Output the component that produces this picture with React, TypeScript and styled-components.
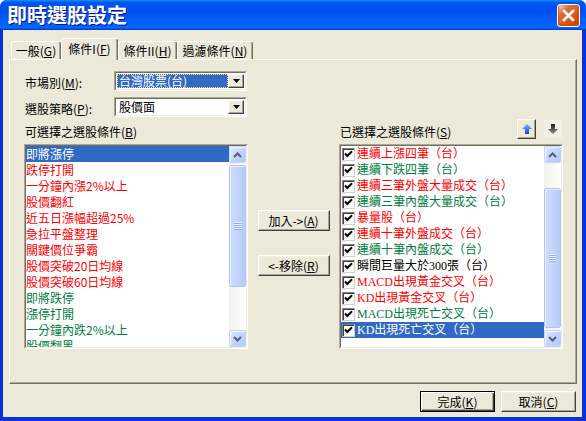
import React from 'react';
import styled, { createGlobalStyle, css } from 'styled-components';

const UI_FONT = `"Noto Sans CJK TC", "Liberation Sans", sans-serif`;
const RED = '#FF0000';
const GREEN = '#008040';
const HILITE = '#316AC5';

const GlobalStyle = createGlobalStyle`
  html, body { margin: 0; padding: 0; background: #ffffff; }
  body { font-family: ${UI_FONT}; font-size: 12px; }
  #root { width: 586px; height: 421px; }
`;

const Window = styled.div`
  width: 586px;
  height: 421px;
  box-sizing: border-box;
  display: flex;
  flex-direction: column;
  background: #0831d9;
  border-radius: 7px 7px 0 0;
  overflow: hidden;
  font-family: ${UI_FONT};
  font-size: 12px;
  color: #000;
`;

const TitleBar = styled.div`
  height: 30px;
  flex: none;
  display: flex;
  align-items: center;
  justify-content: space-between;
  padding: 0 6px 0 7px;
  background: linear-gradient(
    180deg,
    #0997ff,
    #0053ee 8%,
    #0050ee 40%,
    #0066ff 88%,
    #0066ff 93%,
    #005bff 95%,
    #003dd7 96%,
    #003dd7
  );
`;

const Title = styled.div`
  color: #fff;
  font-weight: 700;
  font-size: 20px;
  line-height: 24px;
  text-shadow: 1px 1px #0f1089;
  white-space: nowrap;
`;

const CloseButton = styled.div`
  width: 21px;
  height: 21px;
  border: 1px solid #fff;
  border-radius: 3px;
  background: radial-gradient(circle at 90% 90%, #cc4600 0%, #dc6527 55%, #cd7546 70%, #ffccb2 90%, #fff 100%);
  box-shadow: inset 0 -1px 2px 1px #da4600;
  display: flex;
  align-items: center;
  justify-content: center;
`;

const Body = styled.div`
  flex: 1;
  margin: 0 4px 4px 3px;
  background: #ece9d8;
  padding: 8px 5px 0 6px;
  display: flex;
  flex-direction: column;
`;

const TabRow = styled.div`
  display: flex;
  align-items: flex-end;
  height: 21px;
  padding-left: 2px;
  flex: none;
`;

const Tab = styled.div<{ $active?: boolean; $w: number }>`
  box-sizing: border-box;
  width: ${(p) => p.$w}px;
  height: ${(p) => (p.$active ? 22 : 18)}px;
  margin-bottom: ${(p) => (p.$active ? -1 : 0)}px;
  padding-bottom: ${(p) => (p.$active ? 2 : 0)}px;
  position: relative;
  z-index: ${(p) => (p.$active ? 2 : 1)};
  background: #ece9d8;
  border-top: 1px solid #fff;
  border-left: 1px solid #fff;
  border-right: 1px solid #716f64;
  box-shadow: inset -1px 0 #aca899;
  border-radius: 3px 3px 0 0;
  display: flex;
  align-items: center;
  justify-content: center;
  line-height: 16px;
  white-space: nowrap;
`;

const Key = styled.u`
  text-decoration: underline;
  text-underline-offset: 1px;
`;

const Panel = styled.div`
  box-sizing: border-box;
  height: 325px;
  flex: none;
  border: 1px solid;
  border-color: #fff #716f64 #716f64 #fff;
  box-shadow: inset -1px -1px #aca899;
  padding: 11px 0 0 14px;
  display: flex;
  flex-direction: column;
`;

const FormRow = styled.div`
  display: grid;
  grid-template-columns: 90px 133px;
  align-items: start;
  height: 20px;
  & + & {
    margin-top: 6px;
  }
`;

const FieldLabel = styled.div`
  padding: 4px 0 0 1px;
  line-height: 16px;
  white-space: nowrap;
`;

const Sunken = styled.div`
  box-sizing: border-box;
  border: 1px solid;
  border-color: #aca899 #fff #fff #aca899;
`;

const SunkenInner = styled.div`
  box-sizing: border-box;
  height: 100%;
  border: 1px solid;
  border-color: #716f64 #f1efe2 #f1efe2 #716f64;
  background: #fff;
`;

const Combo = styled(Sunken)`
  height: 20px;
`;

const ComboInner = styled(SunkenInner)`
  display: flex;
  padding: 1px;
`;

const ComboValue = styled.div<{ $focused?: boolean }>`
  flex: 1;
  box-sizing: border-box;
  line-height: 12px;
  padding-left: 1px;
  white-space: nowrap;
  border: 1px ${(p) => (p.$focused ? 'dotted #f7e28a' : 'solid transparent')};
  background: ${(p) => (p.$focused ? HILITE : 'transparent')};
  color: ${(p) => (p.$focused ? '#fff' : '#000')};
`;

const raised = css`
  border: 1px solid;
  border-color: #fff #404040 #404040 #fff;
  box-shadow: inset -1px -1px #aca899, inset 1px 1px #f1efe2;
  background: #ece9d8;
`;

const ComboButton = styled.div`
  box-sizing: border-box;
  width: 16px;
  flex: none;
  ${raised};
  display: flex;
  align-items: center;
  justify-content: center;
`;

const ListsGrid = styled.div`
  display: grid;
  grid-template-columns: 224px 91px 224px;
  margin-top: 2px;
`;

const Column = styled.div`
  display: flex;
  flex-direction: column;
`;

const ColumnHeader = styled.div`
  height: 25px;
  display: flex;
  justify-content: space-between;
  align-items: flex-start;
`;

const HeaderLabel = styled.div`
  align-self: flex-end;
  padding: 0 0 4px 1px;
  line-height: 16px;
  white-space: nowrap;
`;

const OrderButtons = styled.div`
  display: flex;
  gap: 8px;
  margin-right: 1px;
`;

const OrderButton = styled.div<{ $raised?: boolean }>`
  box-sizing: border-box;
  display: flex;
  align-items: center;
  justify-content: center;
  ${(p) =>
    p.$raised
      ? css`
          width: 19px;
          height: 20px;
          ${raised};
        `
      : css`
          width: 18px;
          height: 18px;
          margin-top: 1px;
          background: #f1efe6;
        `}
`;

const ListFrame = styled(Sunken)`
  height: 205px;
`;

const ListInner = styled(SunkenInner)`
  display: flex;
`;

const Items = styled.div`
  flex: 1;
  overflow: hidden;
`;

const ItemRow = styled.div<{ $color: string; $selected?: boolean; $serif?: boolean }>`
  height: 16px;
  line-height: 16px;
  white-space: nowrap;
  display: flex;
  align-items: center;
  color: ${(p) => (p.$selected ? '#fff' : p.$color)};
  background: ${(p) => (p.$selected ? HILITE : 'transparent')};
  font-family: ${(p) => (p.$serif ? `"Liberation Serif", ${UI_FONT}` : UI_FONT)};
`;

const CheckBox = styled.span`
  box-sizing: border-box;
  width: 13px;
  height: 13px;
  flex: none;
  margin: 0 2px 0 1px;
  background: #fff;
  border: 1px solid;
  border-color: #808080 #d4d0c8 #d4d0c8 #808080;
  box-shadow: inset 1px 1px #404040;
  display: flex;
  align-items: center;
  justify-content: center;
`;

const ScrollBar = styled.div`
  width: 17px;
  flex: none;
  display: flex;
  flex-direction: column;
  background: linear-gradient(to right, #f3f1ec, #fefefb);
`;

const ScrollArrow = styled.div`
  box-sizing: border-box;
  height: 17px;
  flex: none;
  border: 1px solid #c3d3fd;
  border-radius: 2px;
  background: linear-gradient(135deg, #e3ebff 0%, #c5d6fd 45%, #b5c9f8 100%);
  box-shadow: inset 1px 1px #f2f6ff;
  display: flex;
  align-items: center;
  justify-content: center;
`;

const Track = styled.div`
  flex: 1;
  display: flex;
  flex-direction: column;
`;

const Thumb = styled.div<{ $top: number; $h: number }>`
  box-sizing: border-box;
  margin-top: ${(p) => p.$top}px;
  height: ${(p) => p.$h}px;
  border: 1px solid #b1c5f4;
  border-radius: 2px;
  background: linear-gradient(to right, #cfdcfe 0%, #c3d4fd 50%, #b7caf8 100%);
  box-shadow: inset 1px 1px #e6eeff;
  display: flex;
  align-items: center;
  justify-content: center;
`;

const Grip = styled.div`
  width: 7px;
  height: 8px;
  background: repeating-linear-gradient(to bottom, #eef4fe 0 1px, #8cb0f8 1px 2px);
`;

const MiddleColumn = styled.div`
  display: flex;
  flex-direction: column;
  align-items: center;
  padding-top: 91px;
  gap: 24px;
`;

const Button = styled.div<{ $w: number; $default?: boolean }>`
  box-sizing: border-box;
  width: ${(p) => p.$w}px;
  height: 21px;
  ${raised};
  ${(p) =>
    p.$default &&
    css`
      border: 1px solid #000;
      box-shadow: inset 1px 1px #fff, inset -1px -1px #404040, inset -2px -2px #aca899;
    `}
  display: flex;
  align-items: center;
  justify-content: center;
  line-height: 16px;
  white-space: nowrap;
`;

const Footer = styled.div`
  display: flex;
  justify-content: flex-end;
  gap: 6px;
  margin-top: 7px;
  padding-right: 1px;
`;

const DownTriangle = () => (
  <svg width="7" height="4" viewBox="0 0 7 4">
    <path d="M0 0 H7 L3.5 4 Z" fill="#000" />
  </svg>
);

const Chevron = ({ up }: { up?: boolean }) => (
  <svg width="9" height="6" viewBox="0 0 9 6">
    <polyline
      points={up ? '1,5 4.5,1.5 8,5' : '1,1 4.5,4.5 8,1'}
      fill="none"
      stroke="#4d6185"
      strokeWidth="2"
    />
  </svg>
);

const Check = () => (
  <svg width="9" height="9" viewBox="0 0 9 9">
    <path d="M1 3.5 L3.3 6 L8 1.3" fill="none" stroke="#000" strokeWidth="2" />
  </svg>
);

const ArrowIcon = ({ down }: { down?: boolean }) => (
  <svg width="12" height="12" viewBox="0 0 12 12">
    <defs>
      <linearGradient id="upg" x1="0" y1="0" x2="0" y2="1">
        <stop offset="0" stopColor="#7fb2ff" />
        <stop offset="1" stopColor="#1046d8" />
      </linearGradient>
      <linearGradient id="dng" x1="0" y1="0" x2="0" y2="1">
        <stop offset="0" stopColor="#202020" />
        <stop offset="1" stopColor="#8a8a8a" />
      </linearGradient>
    </defs>
    {down ? (
      <polygon points="4,1 8,1 8,6 11,6 6,11 1,6 4,6" fill="url(#dng)" />
    ) : (
      <polygon points="6,1 11,6 8,6 8,11 4,11 4,6 1,6" fill="url(#upg)" />
    )}
  </svg>
);

type Item = { text: string; color: string };

const leftItems: Item[] = [
  { text: '即將漲停', color: RED },
  { text: '跌停打開', color: RED },
  { text: '一分鐘內漲2%以上', color: RED },
  { text: '股價翻紅', color: RED },
  { text: '近五日漲幅超過25%', color: RED },
  { text: '急拉平盤整理', color: RED },
  { text: '關鍵價位爭霸', color: RED },
  { text: '股價突破20日均線', color: RED },
  { text: '股價突破60日均線', color: RED },
  { text: '即將跌停', color: GREEN },
  { text: '漲停打開', color: GREEN },
  { text: '一分鐘內跌2%以上', color: GREEN },
  { text: '股價翻黑', color: GREEN },
];

const rightItems: Item[] = [
  { text: '連續上漲四筆（台）', color: RED },
  { text: '連續下跌四筆（台）', color: GREEN },
  { text: '連續三筆外盤大量成交（台）', color: RED },
  { text: '連續三筆內盤大量成交（台）', color: GREEN },
  { text: '暴量股（台）', color: RED },
  { text: '連續十筆外盤成交（台）', color: RED },
  { text: '連續十筆內盤成交（台）', color: GREEN },
  { text: '瞬間巨量大於300張（台）', color: '#000' },
  { text: 'MACD出現黃金交叉（台）', color: RED },
  { text: 'KD出現黃金交叉（台）', color: RED },
  { text: 'MACD出現死亡交叉（台）', color: GREEN },
  { text: 'KD出現死亡交叉（台）', color: GREEN },
];

const VScroll = ({ top, h }: { top: number; h: number }) => (
  <ScrollBar>
    <ScrollArrow>
      <Chevron up />
    </ScrollArrow>
    <Track>
      <Thumb $top={top} $h={h}>
        <Grip />
      </Thumb>
    </Track>
    <ScrollArrow>
      <Chevron />
    </ScrollArrow>
  </ScrollBar>
);

export default function App() {
  return (
    <>
      <GlobalStyle />
      <Window>
        <TitleBar>
          <Title>即時選股設定</Title>
          <CloseButton>
            <svg width="13" height="13" viewBox="0 0 13 13">
              <path d="M2 2 L11 11 M11 2 L2 11" stroke="#fff" strokeWidth="2.6" strokeLinecap="square" />
            </svg>
          </CloseButton>
        </TitleBar>
        <Body>
          <TabRow>
            <Tab $w={50}>
              一般(<Key>G</Key>)
            </Tab>
            <Tab $w={57} $active>
              條件I(<Key>F</Key>)
            </Tab>
            <Tab $w={59}>
              條件II(<Key>H</Key>)
            </Tab>
            <Tab $w={76}>
              過濾條件(<Key>N</Key>)
            </Tab>
          </TabRow>
          <Panel>
            <FormRow>
              <FieldLabel>
                市場別(<Key>M</Key>):
              </FieldLabel>
              <Combo>
                <ComboInner>
                  <ComboValue $focused>台灣股票(台)</ComboValue>
                  <ComboButton>
                    <DownTriangle />
                  </ComboButton>
                </ComboInner>
              </Combo>
            </FormRow>
            <FormRow>
              <FieldLabel>
                選股策略(<Key>P</Key>):
              </FieldLabel>
              <Combo>
                <ComboInner>
                  <ComboValue>股價面</ComboValue>
                  <ComboButton>
                    <DownTriangle />
                  </ComboButton>
                </ComboInner>
              </Combo>
            </FormRow>
            <ListsGrid>
              <Column>
                <ColumnHeader>
                  <HeaderLabel>
                    可選擇之選股條件(<Key>B</Key>)
                  </HeaderLabel>
                </ColumnHeader>
                <ListFrame>
                  <ListInner>
                    <Items>
                      {leftItems.map((it, i) => (
                        <ItemRow key={it.text} $color={it.color} $selected={i === 0}>
                          {it.text}
                        </ItemRow>
                      ))}
                    </Items>
                    <VScroll top={2} h={122} />
                  </ListInner>
                </ListFrame>
              </Column>
              <MiddleColumn>
                <Button $w={72}>
                  加入-&gt;(<Key>A</Key>)
                </Button>
                <Button $w={72}>
                  &lt;-移除(<Key>R</Key>)
                </Button>
              </MiddleColumn>
              <Column>
                <ColumnHeader>
                  <HeaderLabel>
                    已選擇之選股條件(<Key>S</Key>)
                  </HeaderLabel>
                  <OrderButtons>
                    <OrderButton $raised>
                      <ArrowIcon />
                    </OrderButton>
                    <OrderButton>
                      <ArrowIcon down />
                    </OrderButton>
                  </OrderButtons>
                </ColumnHeader>
                <ListFrame>
                  <ListInner>
                    <Items>
                      {rightItems.map((it, i) => (
                        <ItemRow
                          key={it.text}
                          $color={it.color}
                          $selected={i === rightItems.length - 1}
                          $serif
                        >
                          <CheckBox>
                            <Check />
                          </CheckBox>
                          {it.text}
                        </ItemRow>
                      ))}
                    </Items>
                    <VScroll top={25} h={140} />
                  </ListInner>
                </ListFrame>
              </Column>
            </ListsGrid>
          </Panel>
          <Footer>
            <Button $w={75} $default>
              完成(<Key>K</Key>)
            </Button>
            <Button $w={75}>
              取消(<Key>C</Key>)
            </Button>
          </Footer>
        </Body>
      </Window>
    </>
  );
}
